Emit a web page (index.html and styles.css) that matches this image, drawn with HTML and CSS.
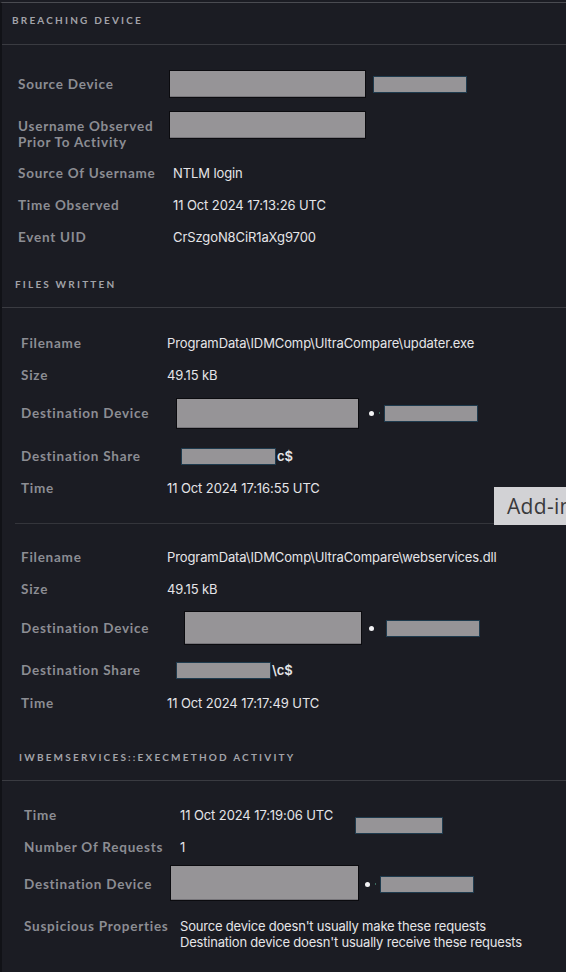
FILE: index.html
```html
<!DOCTYPE html>
<html>
<head>
<meta charset="utf-8">
<link rel="stylesheet" href="styles.css">
</head>
<body>
<div class="panel">
  <section class="sec sec-breach">
    <div class="head head-first">BREACHING DEVICE</div>
    <div class="body body-first">
      <div class="row h32">
        <div class="label">Source Device</div>
        <div class="value"><span class="redact big offm4"></span><span class="redact small gap7"></span></div>
      </div>
      <div class="row h57 top">
        <div class="label two">Username Observed<br>Prior To Activity</div>
        <div class="value"><span class="redact big mt11 offm4"></span></div>
      </div>
      <div class="row h32">
        <div class="label">Source Of Username</div>
        <div class="value">NTLM login</div>
      </div>
      <div class="row h32">
        <div class="label">Time Observed</div>
        <div class="value">11 Oct 2024 17:13:26 UTC</div>
      </div>
      <div class="row h32">
        <div class="label">Event UID</div>
        <div class="value">CrSzgoN8CiR1aXg9700</div>
      </div>
    </div>
  </section>

  <section class="sec sec-files">
    <div class="head head-files">FILES WRITTEN</div>
    <div class="body body-files1">
      <div class="row h32">
        <div class="label">Filename</div>
        <div class="value">ProgramData\IDMComp\UltraCompare\updater.exe</div>
      </div>
      <div class="row h32">
        <div class="label">Size</div>
        <div class="value">49.15 kB</div>
      </div>
      <div class="row h44">
        <div class="label">Destination Device</div>
        <div class="value"><span class="redact big w182 off9"></span><span class="dot d12"></span><span class="tick"></span><span class="redact small"></span></div>
      </div>
      <div class="row h42">
        <div class="label">Destination Share</div>
        <div class="value"><span class="redact share off14"></span><span class="share-txt">c$</span></div>
      </div>
      <div class="row h22">
        <div class="label">Time</div>
        <div class="value">11 Oct 2024 17:16:55 UTC</div>
      </div>
    </div>
    <div class="divider"></div>
    <div class="body body-files2">
      <div class="row h32">
        <div class="label">Filename</div>
        <div class="value">ProgramData\IDMComp\UltraCompare\webservices.dll</div>
      </div>
      <div class="row h32">
        <div class="label">Size</div>
        <div class="value">49.15 kB</div>
      </div>
      <div class="row h46">
        <div class="label">Destination Device</div>
        <div class="value"><span class="redact big w177 off17 tall"></span><span class="dot d9"></span><span class="redact small gap9"></span></div>
      </div>
      <div class="row h38">
        <div class="label">Destination Share</div>
        <div class="value"><span class="redact share off9"></span><span class="share-txt">\c$</span></div>
      </div>
      <div class="row h28">
        <div class="label">Time</div>
        <div class="value">11 Oct 2024 17:17:49 UTC</div>
      </div>
    </div>
  </section>

  <section class="sec sec-wbem">
    <div class="head head-wbem">IWBEMSERVICES::EXECMETHOD ACTIVITY</div>
    <div class="body body-wbem">
      <div class="row h32 top">
        <div class="label lt">Time</div>
        <div class="value lt">11 Oct 2024 17:19:06 UTC<span class="redact small tbox"></span></div>
      </div>
      <div class="row h32">
        <div class="label">Number Of Requests</div>
        <div class="value">1</div>
      </div>
      <div class="row h42">
        <div class="label">Destination Device</div>
        <div class="value"><span class="redact big w188 offm10 tall35"></span><span class="dot d7"></span><span class="tick"></span><span class="redact small gap0"></span></div>
      </div>
      <div class="row top">
        <div class="label susp">Suspicious Properties</div>
        <div class="value susp">Source device doesn't usually make these requests<br>Destination device doesn't usually receive these requests</div>
      </div>
    </div>
  </section>

  <div class="tooltip">Add-in</div>
</div>
</body>
</html>
```

FILE: styles.css
```css
html, body {
  margin: 0;
  padding: 0;
  background: #1b1c23;
  overflow: hidden;
}
body {
  width: 566px;
  height: 972px;
  font-family: Lato, "Liberation Sans", sans-serif;
}
.panel {
  position: relative;
  margin-top: 2px;
  border-top: 1px solid #4a4b51;
  border-left: 2px solid #111217;
  height: 969px;
  background: #1b1c23;
  overflow: hidden;
}
.head {
  font-size: 10px;
  font-weight: 700;
  letter-spacing: 2.2px;
  line-height: 14px;
  color: #a2a3a9;
  border-bottom: 1px solid #3a3b41;
}
.head-first {
  padding: 10px 0 17px 10px;
}
.head-files {
  padding: 24px 0 16px 13px;
}
.head-wbem {
  padding: 33px 0 16px 17px;
  letter-spacing: 2.2px;
}
.body-first {
  padding: 23px 0 0 16px;
  --labelw: 155px;
}
.body-files1 {
  padding: 19px 0 24px 19px;
  --labelw: 146px;
}
.body-files2 {
  padding: 17px 0 0 19px;
  --labelw: 146px;
}
.body-wbem {
  padding: 18px 0 0 22px;
  --labelw: 156px;
}
.divider {
  margin-left: 13px;
  border-top: 1px solid #34353b;
}
.row {
  display: flex;
  align-items: center;
}
.row.top {
  align-items: flex-start;
}
.h22 { height: 22px; }
.h28 { height: 28px; }
.h32 { height: 32px; }
.h38 { height: 38px; }
.h42 { height: 42px; }
.h44 { height: 44px; }
.h46 { height: 46px; }
.h57 { height: 57px; }
.label {
  width: var(--labelw);
  flex: none;
  font-size: 13.5px;
  font-weight: 700;
  letter-spacing: 0.75px;
  color: #8c8d93;
  line-height: 16px;
  white-space: nowrap;
}
.label.two {
  margin-top: 18px;
}
.label.lt, .value.lt {
  margin-top: 8px;
}
.label.susp, .value.susp {
  margin-top: 13px;
}
.value {
  display: flex;
  align-items: center;
  font-family: Inter, Lato, sans-serif;
  font-size: 13px;
  color: #e5e5e8;
  line-height: 16px;
  letter-spacing: -0.1px;
  white-space: nowrap;
}
.value.susp {
  display: block;
  letter-spacing: -0.2px;
}
.value.lt {
  align-items: flex-start;
}
.redact {
  display: inline-block;
  background: #969497;
  box-sizing: border-box;
  flex: none;
}
.redact.big {
  width: 197px;
  height: 28px;
  border: 1px solid #0b0b0f;
  box-shadow: inset 0 -1px 0 #77757a;
}
.redact.small {
  width: 94px;
  height: 17px;
  border: 1px solid #1f3b4e;
}
.redact.share {
  width: 95px;
  height: 17px;
  border: 1px solid #1f3b4e;
}
.w182 { width: 183px !important; height: 31px !important; }
.w177 { width: 178px !important; }
.w188 { width: 189px !important; }
.tall { height: 34px !important; }
.tall35 { height: 36px !important; margin-top: -2px; }
.mt11 { margin-top: 11px; }
.gap7 { margin-left: 7px; }
.gap9 { margin-left: 7px; }
.gap0 { margin-left: 0; }
.off9 { margin-left: 9px; }
.off14 { margin-left: 14px; }
.off17 { margin-left: 17px; }
.offm4 { margin-left: -4px; }
.offm10 { margin-left: -10px; }
.dot {
  display: inline-block;
  width: 5px;
  height: 5px;
  border-radius: 50%;
  background: #f2f2f4;
  margin-right: 5px;
}
.d12 { margin-left: 10px; }
.d9 { margin-left: 7px; }
.d7 { margin-left: 6px; }
.tick {
  display: inline-block;
  width: 1px;
  height: 2px;
  background: #3b6a5e;
  margin-right: 4px;
}
.share-txt {
  margin-left: 1px;
  font-weight: 600;
  letter-spacing: 0;
}
.redact.small.tbox {
  width: 88px;
  margin-left: 22px;
  margin-top: 10px;
}
.tooltip {
  position: absolute;
  left: 492px;
  top: 484px;
  width: 72px;
  height: 38px;
  box-sizing: border-box;
  padding-left: 13px;
  background: #d2d2d5;
  color: #3a3a3c;
  font-family: "Open Sans", "Noto Sans", sans-serif;
  font-size: 21px;
  line-height: 38px;
  letter-spacing: 0.3px;
  white-space: nowrap;
  overflow: hidden;
}
```
